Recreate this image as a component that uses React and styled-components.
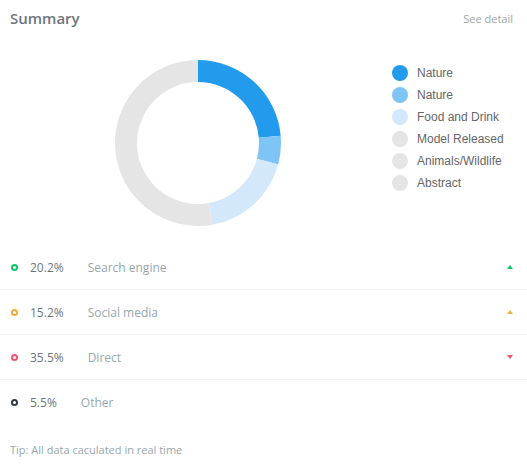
import React from "react";
import styled, { createGlobalStyle } from "styled-components";

const Global = createGlobalStyle`
  html, body { margin: 0; padding: 0; background: #fff; }
  body { font-family: "Open Sans", sans-serif; }
`;

const Card = styled.div`
  width: 527px;
  height: 473px;
  background: #fff;
  box-sizing: border-box;
`;

const Header = styled.div`
  height: 36px;
  display: flex;
  align-items: center;
  justify-content: space-between;
  padding: 0 14px 0 10px;
`;

const Title = styled.h4`
  margin: 0;
  font-size: 15px;
  font-weight: 600;
  color: #6c757d;
`;

const Link = styled.a`
  font-size: 11px;
  color: #98a6ad;
  text-decoration: none;
`;

const ChartArea = styled.div`
  display: flex;
  align-items: flex-start;
  padding: 24px 0 19px 115px;
`;

const Legend = styled.ul`
  list-style: none;
  margin: 2px 0 0 111px;
  padding: 0;
  display: flex;
  flex-direction: column;
`;

const LegendItem = styled.li`
  height: 22px;
  display: flex;
  align-items: center;
  gap: 9px;
  font-family: "Liberation Sans", Arial, sans-serif;
  font-size: 12px;
  color: #666;
`;

const Swatch = styled.span`
  width: 16px;
  height: 16px;
  border-radius: 50%;
  background: ${(p) => p.$c};
  flex: none;
`;

const Rows = styled.div`
  display: flex;
  flex-direction: column;
`;

const Row = styled.div`
  height: 44px;
  display: flex;
  align-items: center;
  padding: 0 14px 0 11px;
  border-bottom: 1px solid ${(p) => (p.$last ? "transparent" : "#f1f3f5")};
`;

const Dot = styled.span`
  width: 7px;
  height: 7px;
  box-sizing: border-box;
  border-radius: 50%;
  border: 2px solid ${(p) => p.$c};
  flex: none;
`;

const Percent = styled.span`
  margin-left: 12px;
  font-size: 12px;
  color: #6c757d;
`;

const Label = styled.span`
  margin-left: 24px;
  font-size: 12px;
  color: #98a6ad;
  flex: 1;
`;

const Triangle = styled.span`
  width: 0;
  height: 0;
  border-left: 3.5px solid transparent;
  border-right: 3.5px solid transparent;
  ${(p) =>
    p.$down
      ? `border-top: 4px solid ${p.$c};`
      : `border-bottom: 4px solid ${p.$c};`}
`;

const Tip = styled.p`
  margin: 17px 0 0 10px;
  font-size: 11px;
  color: #98a6ad;
`;

function arc(cx, cy, r0, r1, a0, a1) {
  const rad = (a) => ((a - 90) * Math.PI) / 180;
  const p = (r, a) => [cx + r * Math.cos(rad(a)), cy + r * Math.sin(rad(a))];
  const large = a1 - a0 > 180 ? 1 : 0;
  const [x0, y0] = p(r1, a0);
  const [x1, y1] = p(r1, a1);
  const [x2, y2] = p(r0, a1);
  const [x3, y3] = p(r0, a0);
  return `M${x0} ${y0} A${r1} ${r1} 0 ${large} 1 ${x1} ${y1} L${x2} ${y2} A${r0} ${r0} 0 ${large} 0 ${x3} ${y3} Z`;
}

const segments = [
  { a0: 0, a1: 85, c: "#239bec" },
  { a0: 85, a1: 105, c: "#7ec4f5" },
  { a0: 105, a1: 170, c: "#d3e9fb" },
  { a0: 170, a1: 359.99, c: "#e5e5e5" },
];

const legend = [
  ["Nature", "#239bec"],
  ["Nature", "#7ec4f5"],
  ["Food and Drink", "#d3e9fb"],
  ["Model Released", "#e5e5e5"],
  ["Animals/Wildlife", "#e5e5e5"],
  ["Abstract", "#e5e5e5"],
];

const rows = [
  { c: "#10c469", pct: "20.2%", label: "Search engine", trend: "up" },
  { c: "#f9a93b", pct: "15.2%", label: "Social media", trend: "up" },
  { c: "#f1556c", pct: "35.5%", label: "Direct", trend: "down" },
  { c: "#323a46", pct: "5.5%", label: "Other" },
];

export default function App() {
  return (
    <Card>
      <Global />
      <Header>
        <Title>Summary</Title>
        <Link href="#">See detail</Link>
      </Header>
      <ChartArea>
        <svg width="166" height="166" viewBox="0 0 166 166">
          {segments.map((s, i) => (
            <path key={i} d={arc(83, 83, 61, 83, s.a0, s.a1)} fill={s.c} />
          ))}
        </svg>
        <Legend>
          {legend.map(([t, c], i) => (
            <LegendItem key={i}>
              <Swatch $c={c} />
              {t}
            </LegendItem>
          ))}
        </Legend>
      </ChartArea>
      <Rows>
        {rows.map((r, i) => (
          <Row key={i} $last={i === rows.length - 1}>
            <Dot $c={r.c} />
            <Percent>{r.pct}</Percent>
            <Label>{r.label}</Label>
            {r.trend && <Triangle $c={r.c} $down={r.trend === "down"} />}
          </Row>
        ))}
      </Rows>
      <Tip>Tip: All data caculated in real time</Tip>
    </Card>
  );
}
